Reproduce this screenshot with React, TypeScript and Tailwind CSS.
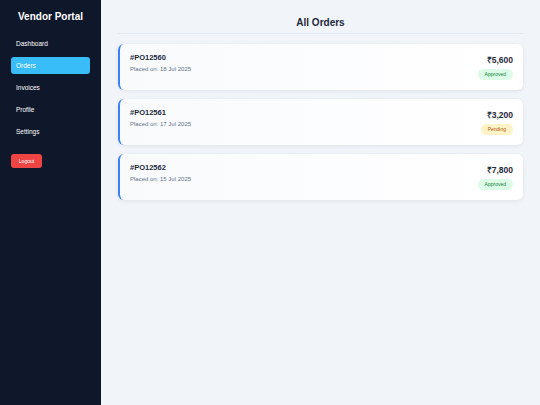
import React from "react";

const orders = [
    { id: "#PO12560", date: "18 Jul 2025", amount: "₹5,600", status: "Approved" },
    { id: "#PO12561", date: "17 Jul 2025", amount: "₹3,200", status: "Pending" },
    { id: "#PO12562", date: "15 Jul 2025", amount: "₹7,800", status: "Approved" },
];

const nav = ["Dashboard", "Orders", "Invoices", "Profile", "Settings"];

export default function App() {
    return (
        <div className="flex min-h-screen bg-[#f1f5f9] font-['Liberation_Sans',Arial,sans-serif]">
            {/* Sidebar */}
            <aside className="w-[101px] shrink-0 bg-[#0f172a] text-white px-[11px] pt-[10px]">
                <h1 className="text-center text-[10px] font-bold leading-[13px]">Vendor Portal</h1>
                <nav className="mt-[12px] flex flex-col gap-[5px]">
                    {nav.map((item) => (
                        <div
                            key={item}
                            className={
                                item === "Orders"
                                    ? "h-[17px] rounded-[3px] bg-[#38bdf8] pl-[5px] text-[6.5px] leading-[17px] text-white"
                                    : "h-[17px] pl-[5px] text-[6.5px] leading-[17px] text-white"
                            }
                        >
                            {item}
                        </div>
                    ))}
                </nav>
                <button className="mt-[14px] h-[14px] w-[31px] rounded-[3px] bg-[#ef4444] text-[5px] leading-[14px] text-white">
                    Logout
                </button>
            </aside>

            {/* Main */}
            <main className="flex-1 px-[17px] pt-[16px]">
                <div className="border-b border-[#e2e8f0] pb-[4px]">
                    <h2 className="text-center text-[10px] font-bold leading-[13px] text-[#1e293b]">All Orders</h2>
                </div>
                <div className="mt-[10px] flex flex-col gap-[9px]">
                    {orders.map((o) => (
                        <div
                            key={o.id}
                            className="flex h-[46px] items-start justify-between rounded-[6px] border-l-2 border-[#3b82f6] bg-gradient-to-r from-[#f8fafc] to-white pl-[10px] pr-[10px] pt-[9px] shadow-[0_1px_4px_rgba(15,23,42,0.08)]"
                        >
                            <div>
                                <div className="text-[7.5px] font-bold leading-[10px] text-[#1e293b]">{o.id}</div>
                                <div className="mt-[2px] text-[6px] leading-[8px] text-[#64748b]">Placed on: {o.date}</div>
                            </div>
                            <div className="flex flex-col items-end pt-[2px]">
                                <div className="text-[8.5px] font-bold leading-[11px] text-[#1e293b]">{o.amount}</div>
                                <span
                                    className={
                                        o.status === "Approved"
                                            ? "mt-[3px] rounded-full bg-[#dcfce7] px-[7px] text-[5px] leading-[11px] text-[#15803d]"
                                            : "mt-[3px] rounded-full bg-[#fef3c7] px-[7px] text-[5px] leading-[11px] text-[#b45309]"
                                    }
                                >
                                    {o.status}
                                </span>
                            </div>
                        </div>
                    ))}
                </div>
            </main>
        </div>
    );
}
